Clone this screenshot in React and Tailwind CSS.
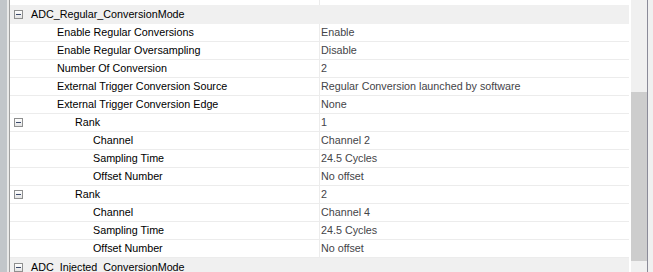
import React from 'react';

const rows = [
  { type: 'group', label: 'ADC_Regular_ConversionMode' },
  { label: 'Enable Regular Conversions', value: 'Enable', indent: 1 },
  { label: 'Enable Regular Oversampling', value: 'Disable', indent: 1 },
  { label: 'Number Of Conversion', value: '2', indent: 1 },
  { label: 'External Trigger Conversion Source', value: 'Regular Conversion launched by software', indent: 1 },
  { label: 'External Trigger Conversion Edge', value: 'None', indent: 1 },
  { type: 'rank', label: 'Rank', value: '1' },
  { label: 'Channel', value: 'Channel 2', indent: 2 },
  { label: 'Sampling Time', value: '24.5 Cycles', indent: 2 },
  { label: 'Offset Number', value: 'No offset', indent: 2 },
  { type: 'rank', label: 'Rank', value: '2' },
  { label: 'Channel', value: 'Channel 4', indent: 2 },
  { label: 'Sampling Time', value: '24.5 Cycles', indent: 2 },
  { label: 'Offset Number', value: 'No offset', indent: 2 },
  { type: 'group', label: 'ADC_Injected_ConversionMode' },
];

// small collapse box like the WinForms property grid
const MinusBox = () => (
  <span className="flex h-[9px] w-[9px] items-center justify-center border border-[#8e8f8f] bg-gradient-to-b from-white to-[#e4e4e4]">
    <span className="h-px w-[5px] bg-[#3b4a6b]" />
  </span>
);

const Row = ({ row }) => {
  if (row.type === 'group') {
    return (
      <div className="flex h-[18px] items-center bg-[#f0f0f0] text-black">
        <span className="ml-[4px] w-[17px]">
          <MinusBox />
        </span>
        <span>{row.label}</span>
      </div>
    );
  }

  const pad = row.indent === 1 ? 'pl-[47px]' : 'pl-[83px]';

  return (
    <div className="flex h-[18px] items-center border-b border-[#ececec]">
      {row.type === 'rank' ? (
        <div className="flex w-[310px] items-center border-r border-[#ececec] h-full">
          <span className="ml-[4px] w-[61px]">
            <MinusBox />
          </span>
          <span className="text-black">{row.label}</span>
        </div>
      ) : (
        <div className={`flex h-full w-[310px] items-center border-r border-[#ececec] text-black ${pad}`}>
          {row.label}
        </div>
      )}
      <div className="pl-[1px] text-[#444448]">{row.value}</div>
    </div>
  );
};

export default function App() {
  return (
    <div
      className="flex h-[272px] w-[653px] overflow-hidden bg-white text-[10.75px] leading-none"
      style={{ fontFamily: '"Liberation Sans", Arial, sans-serif' }}
    >
      {/* left gutter */}
      <div className="flex">
        <div className="w-[7px] bg-[#c2c6ca]" />
        <div className="w-[2px] bg-[#e9e9e9]" />
        <div className="w-px bg-[#a0a0a0]" />
      </div>

      {/* grid */}
      <div className="flex w-[619px] flex-col">
        <div className="flex h-[5px] shrink-0">
          <div className="w-[310px] border-r border-[#ececec]" />
        </div>
        <div className="shrink-0">
          <div className="flex h-[19px] items-center bg-[#f0f0f0] text-black">
            <span className="ml-[4px] w-[17px]">
              <MinusBox />
            </span>
            <span>{rows[0].label}</span>
          </div>
          {rows.slice(1).map((row, i) => (
            <Row key={i} row={row} />
          ))}
        </div>
      </div>

      {/* scrollbar */}
      <div className="w-[2px] bg-white" />
      <div className="flex w-[16px] flex-col bg-[#f0f0f0]">
        <div className="h-[92px]" />
        <div className="h-[169px] bg-[#cdcdcd]" />
      </div>
      <div className="w-px bg-[#8b8b99]" />
      <div className="flex-1 bg-[#f0f0f0]" />
    </div>
  );
}
